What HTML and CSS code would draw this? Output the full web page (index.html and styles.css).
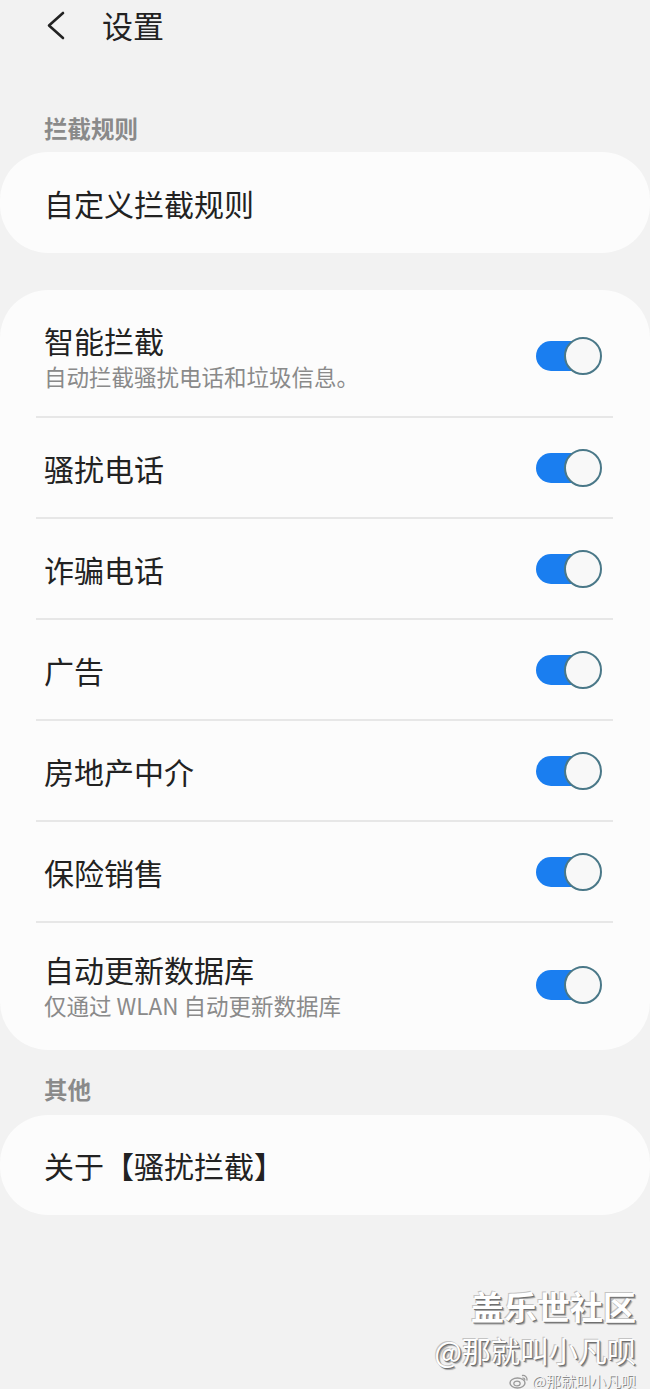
FILE: index.html
```html
<!DOCTYPE html>
<html lang="zh-CN">
<head>
<meta charset="UTF-8" />
<meta name="viewport" content="width=device-width, initial-scale=1" />
<title>设置</title>
<link rel="stylesheet" href="styles.css">
</head>
<body>
  <header class="topbar">
    <svg class="back" width="24" height="36" viewBox="0 0 24 36" aria-hidden="true">
      <path d="M19 6 L5 18.5 L19 31" fill="none" stroke="#222" stroke-width="2.6" stroke-linecap="round" stroke-linejoin="round"/>
    </svg>
    <h1 class="title">设置</h1>
  </header>

  <div class="label label-first">拦截规则</div>
  <section class="card card-single">
    <div class="single-text">自定义拦截规则</div>
  </section>

  <section class="card card-list">
    <div class="row row-two">
      <div class="row-text">
        <div class="row-title">智能拦截</div>
        <div class="row-sub">自动拦截骚扰电话和垃圾信息。</div>
      </div>
      <div class="switch"><span class="knob"></span></div>
    </div>
    <div class="row">
      <div class="row-title">骚扰电话</div>
      <div class="switch"><span class="knob"></span></div>
    </div>
    <div class="row">
      <div class="row-title">诈骗电话</div>
      <div class="switch"><span class="knob"></span></div>
    </div>
    <div class="row">
      <div class="row-title">广告</div>
      <div class="switch"><span class="knob"></span></div>
    </div>
    <div class="row">
      <div class="row-title">房地产中介</div>
      <div class="switch"><span class="knob"></span></div>
    </div>
    <div class="row">
      <div class="row-title">保险销售</div>
      <div class="switch"><span class="knob"></span></div>
    </div>
    <div class="row row-two row-last">
      <div class="row-text">
        <div class="row-title">自动更新数据库</div>
        <div class="row-sub">仅通过 WLAN 自动更新数据库</div>
      </div>
      <div class="switch"><span class="knob"></span></div>
    </div>
  </section>

  <div class="label label-other">其他</div>
  <section class="card card-single card-about">
    <div class="single-text">关于【骚扰拦截】</div>
  </section>

  <footer class="watermark">
    <div class="wm-big">盖乐世社区</div>
    <div class="wm-user">@那就叫小凡呗</div>
    <div class="wm-weibo">
      <svg width="20" height="16" viewBox="0 0 20 16" aria-hidden="true">
        <ellipse cx="8.5" cy="10" rx="7.5" ry="5" fill="none" stroke="#9a9a9a" stroke-width="1.4"/>
        <ellipse cx="8" cy="10.5" rx="3.2" ry="2.4" fill="none" stroke="#9a9a9a" stroke-width="1.2"/>
        <path d="M13.5 2.5 a4 4 0 0 1 4.5 4.5" fill="none" stroke="#9a9a9a" stroke-width="1.3" stroke-linecap="round"/>
        <path d="M13.8 5 a1.8 1.8 0 0 1 2 2" fill="none" stroke="#9a9a9a" stroke-width="1.2" stroke-linecap="round"/>
      </svg>
      <span>@那就叫小凡呗</span>
    </div>
  </footer>
</body>
</html>
```

FILE: styles.css
```css
:root {
  --bg-color: #f2f2f2;
  --card-color: #fcfcfc;
  --text-color: #222222;
  --muted-color: #8a8a8a;
  --accent-color: #1a7ef0;
  --font-family: "Noto Sans CJK SC", "Noto Sans", sans-serif;
}
* {
  box-sizing: border-box;
}
body {
  margin: 0;
  padding: 0;
  background-color: var(--bg-color);
  color: var(--text-color);
  font-family: var(--font-family);
  width: 650px;
  min-height: 1389px;
}
.topbar {
  display: flex;
  align-items: center;
  height: 50px;
  padding-left: 44px;
}
.back {
  display: block;
  flex-shrink: 0;
}
.title {
  margin: 0 0 0 34px;
  font-size: 31px;
  font-weight: 400;
  line-height: 40px;
}
.label {
  padding-left: 44px;
  font-size: 23.5px;
  font-weight: 700;
  line-height: 30px;
  color: var(--muted-color);
}
.label-first {
  margin-top: 63px;
}
.label-other {
  margin-top: 24px;
}
.card {
  background-color: var(--card-color);
  border-radius: 48px;
}
.card-single {
  display: flex;
  align-items: center;
  height: 101px;
  margin-top: 9px;
  padding-left: 44px;
}
.card-about {
  margin-top: 11px;
  height: 100px;
}
.single-text {
  font-size: 30px;
  line-height: 40px;
}
.card-list {
  margin-top: 37px;
  padding: 4px 37px 5px 36px;
}
.row {
  display: flex;
  align-items: center;
  justify-content: space-between;
  height: 101px;
  padding: 0 21px 0 8px;
  border-bottom: 2px solid #e7e7e7;
}
.row-two {
  height: 124px;
  padding-top: 26px;
  padding-bottom: 24px;
}
.row-last {
  height: 122px;
  border-bottom: 0;
}
.row-title {
  font-size: 30px;
  line-height: 40px;
}
.row-sub {
  font-size: 22.5px;
  line-height: 32px;
  color: var(--muted-color);
}
/* toggle: knob hangs off the right end of the track */
.switch {
  display: flex;
  align-items: center;
  justify-content: flex-end;
  width: 56px;
  height: 30px;
  border-radius: 15px;
  background-color: var(--accent-color);
  flex-shrink: 0;
}
.knob {
  width: 38px;
  height: 38px;
  margin-right: -10px;
  border: 2px solid #4a7888;
  border-radius: 50%;
  background-color: #f8f8f8;
  flex-shrink: 0;
}
.watermark {
  margin-top: 71px;
  padding-right: 14px;
  text-align: right;
  font-weight: 700;
}
.wm-big {
  font-size: 33px;
  line-height: 40px;
  color: #ffffff;
  text-shadow: 1px 1px 0 #6f6f6f, 2px 2px 1px #a0a0a0, -1px -1px 0 #c4c4c4;
}
.wm-user {
  margin-top: 4px;
  font-size: 29px;
  font-weight: 400;
  line-height: 40px;
  color: #ffffff;
  text-shadow: 1px 1px 0 #6f6f6f, 2px 2px 1px #a0a0a0, -1px -1px 0 #c4c4c4;
}
.wm-weibo {
  display: flex;
  justify-content: flex-end;
  align-items: center;
  gap: 3px;
  margin-top: 2px;
  font-size: 15px;
  font-weight: 400;
  line-height: 18px;
  color: #f4f4f4;
  text-shadow: 1px 1px 0 #8a8a8a;
}
```
